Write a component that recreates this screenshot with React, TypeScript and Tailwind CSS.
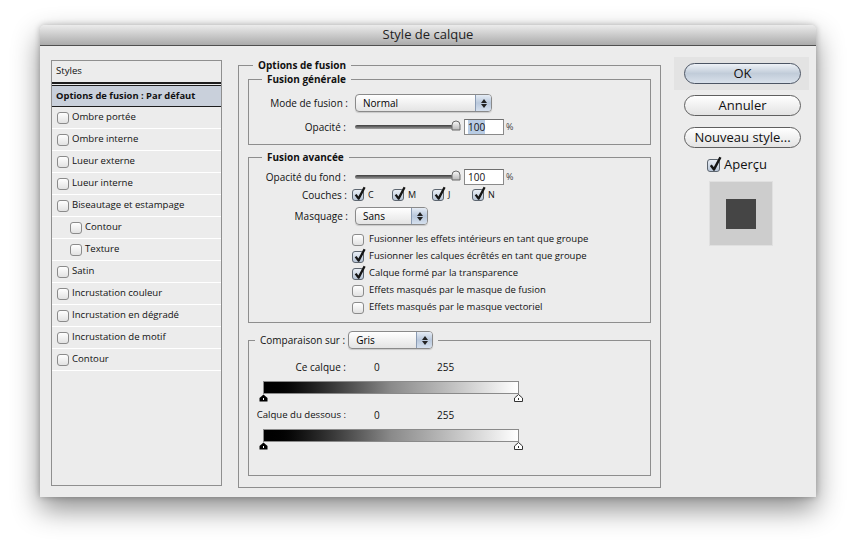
import React from 'react';

const FONT = "font-['Open_Sans',sans-serif]";

const Check = ({ checked = false, big = false }: { checked?: boolean; big?: boolean }) => (
  <span
    className={`relative inline-block shrink-0 border rounded-[3px] ${
      big ? 'w-[13px] h-[13px]' : 'w-[12px] h-[12px]'
    } ${
      checked
        ? 'border-[#5d6670] bg-gradient-to-b from-[#e9eef5] to-[#b8c6d8]'
        : 'border-[#8b8b8b] bg-gradient-to-b from-white to-[#e2e2e2]'
    }`}
  >
    {checked && (
      <svg
        className="absolute left-[1px] -top-[4px]"
        width={big ? 13 : 12}
        height={big ? 16 : 15}
        viewBox="0 0 12 15"
      >
        <path d="M1.6 8.6 L4.6 12.6 L10.6 1.2" stroke="#151515" strokeWidth="2.3" fill="none" strokeLinejoin="round" />
      </svg>
    )}
  </span>
);

const Popup = ({ label, width }: { label: string; width: string }) => (
  <div className={`flex h-[18px] ${width} rounded-[4px] border border-[#8a8a8a] bg-gradient-to-b from-white to-[#e4e4e4] shadow-[0_1px_1px_rgba(0,0,0,0.15)] overflow-hidden`}>
    <span className="flex-1 pl-[7px] text-[10px] leading-[16px] text-black">{label}</span>
    <span className="flex w-[16px] flex-col items-center justify-center gap-[1px] border-l border-[#8a9bb3] bg-gradient-to-b from-[#e5ecf5] via-[#b9c8dc] to-[#d5e0ee]">
      <svg width="6" height="4" viewBox="0 0 6 4"><path d="M3 0 L6 4 L0 4 Z" fill="#222" /></svg>
      <svg width="6" height="4" viewBox="0 0 6 4"><path d="M0 0 L6 0 L3 4 Z" fill="#222" /></svg>
    </span>
  </div>
);

const Slider = () => (
  <div className="flex w-[106px] items-center">
    <div className="h-[4px] w-[98px] rounded-full bg-gradient-to-b from-[#3e3e3e] to-[#a2a2a2]" />
    <svg className="-ml-[2px] -mt-[4px]" width="10" height="11" viewBox="0 0 10 11">
      <path d="M1 10 L1 5 Q1 1 5 1 Q9 1 9 5 L9 10 Z" fill="url(#th)" stroke="#6b6b6b" strokeWidth="1" />
      <defs>
        <linearGradient id="th" x1="0" y1="0" x2="0" y2="1">
          <stop offset="0" stopColor="#fafafa" />
          <stop offset="1" stopColor="#b8b8b8" />
        </linearGradient>
      </defs>
    </svg>
  </div>
);

const NumField = ({ selected = false }: { selected?: boolean }) => (
  <div className="flex items-center">
    <div className="ml-[3px] h-[16px] w-[40px] border border-[#8a8a8a] border-t-[#6f6f6f] bg-white pl-[3px] text-[10px] leading-[14px]">
      <span className={selected ? 'bg-[#b8cce4]' : ''}>100</span>
    </div>
    <span className="ml-[2px] text-[9px] text-[#444]">%</span>
  </div>
);

const Legend = ({ children, offset = 'ml-[13px]' }: { children: React.ReactNode; offset?: string }) => (
  <legend className={`${offset} px-[5px] text-[10px] font-bold leading-[12px]`}>{children}</legend>
);

const GradBar = () => (
  <div className="ml-[14px] w-[256px]">
    <div className="h-[13px] border border-[#8a8a8a] bg-gradient-to-r from-black via-[#8a8a8a] to-white" />
    <div className="flex justify-between -mx-[4px] h-[8px]">
      <svg width="9" height="8" viewBox="0 0 9 8"><path d="M0.5 7.5 L0.5 4 L4.5 0.5 L8.5 4 L8.5 7.5 Z" fill="#000" /><path d="M4 4 L5 4 L5 6 L4 6 Z" fill="#fff" /></svg>
      <svg width="9" height="8" viewBox="0 0 9 8"><path d="M0.5 7.5 L0.5 4 L4.5 0.5 L8.5 4 L8.5 7.5 Z" fill="#fff" stroke="#333" strokeWidth="1" /><path d="M4 4 L5 4 L5 6 L4 6 Z" fill="#333" /></svg>
    </div>
  </div>
);

const styleItems: { label: string; indent?: boolean }[] = [
  { label: 'Ombre portée' },
  { label: 'Ombre interne' },
  { label: 'Lueur externe' },
  { label: 'Lueur interne' },
  { label: 'Biseautage et estampage' },
  { label: 'Contour', indent: true },
  { label: 'Texture', indent: true },
  { label: 'Satin' },
  { label: 'Incrustation couleur' },
  { label: 'Incrustation en dégradé' },
  { label: 'Incrustation de motif' },
  { label: 'Contour' },
];

const advancedChecks = [
  { label: 'Fusionner les effets intérieurs en tant que groupe', checked: false },
  { label: 'Fusionner les calques écrêtés en tant que groupe', checked: true },
  { label: 'Calque formé par la transparence', checked: true },
  { label: 'Effets masqués par le masque de fusion', checked: false },
  { label: 'Effets masqués par le masque vectoriel', checked: false },
];

const App: React.FC = () => {
  return (
    <div className={`h-[553px] w-[856px] bg-white pl-[40px] pt-[25px] text-[#111] ${FONT}`}>
      <div className="flex h-[472px] w-[776px] flex-col overflow-hidden rounded-t-[5px] bg-[#ececec] shadow-[0_12px_28px_rgba(0,0,0,0.45),0_0_6px_rgba(0,0,0,0.25)]">
        {/* Title bar */}
        <div className="flex h-[21px] items-center justify-center border-b border-[#4f4f4f] bg-gradient-to-b from-[#ececec] to-[#ababab] text-[13px] text-[#222]">
          Style de calque
        </div>

        <div className="flex flex-1 items-start pl-[11px] pt-[14px]">
          {/* Styles list */}
          <div className="flex h-[426px] w-[171px] flex-col border border-[#8f8f8f] bg-[#ececec] text-[9.6px]">
            <div className="flex h-[23px] items-center border-b-2 border-[#1d1d1d] pl-[4px]">Styles</div>
            <div className="mt-[1px] flex h-[22px] items-center border-y border-[#1d1d1d] bg-[#c9d0db] pl-[4px] text-[9.4px] font-bold">
              Options de fusion : Par défaut
            </div>
            {styleItems.map((it, i) => (
              <div
                key={i}
                className={`flex h-[22px] items-center gap-[3px] border-b border-white ${it.indent ? 'pl-[18px]' : 'pl-[5px]'}`}
              >
                <Check />
                <span>{it.label}</span>
              </div>
            ))}
          </div>

          {/* Options de fusion */}
          <fieldset className="-mt-[1px] ml-[16px] h-[429px] w-[423px] border border-[#8e8e8e] px-[9px]">
            <Legend offset="ml-[5px]">Options de fusion</Legend>

            <fieldset className="mt-[2px] h-[72px] border border-[#8e8e8e]">
              <Legend>Fusion générale</Legend>
              <div className="mt-[9px] flex items-center text-[10px]">
                <span className="w-[99px] text-right">Mode de fusion :</span>
                <div className="ml-[7px]">
                  <Popup label="Normal" width="w-[137px]" />
                </div>
              </div>
              <div className="mt-[7px] flex items-center text-[10px]">
                <span className="w-[97px] text-right">Opacité :</span>
                <div className="ml-[9px] flex items-center">
                  <Slider />
                  <NumField selected />
                </div>
              </div>
            </fieldset>

            <fieldset className="mt-[6px] h-[172px] border border-[#8e8e8e]">
              <Legend>Fusion avancée</Legend>
              <div className="mt-[6px] flex items-center text-[10px]">
                <span className="w-[97px] text-right">Opacité du fond :</span>
                <div className="ml-[9px] flex items-center">
                  <Slider />
                  <NumField />
                </div>
              </div>
              <div className="mt-[3px] flex h-[14px] items-center text-[10px]">
                <span className="w-[98px] text-right">Couches :</span>
                <div className="ml-[5px] flex items-center">
                  {['C', 'M', 'J', 'N'].map((c) => (
                    <span key={c} className="flex w-[40px] items-center gap-[4px]">
                      <Check checked />
                      <span className="text-[9px]">{c}</span>
                    </span>
                  ))}
                </div>
              </div>
              <div className="mt-[5px] flex items-center text-[10px]">
                <span className="w-[99px] text-right">Masquage :</span>
                <div className="ml-[7px]">
                  <Popup label="Sans" width="w-[73px]" />
                </div>
              </div>
              <div className="mt-[6px] flex flex-col pl-[103px] text-[9.5px]">
                {advancedChecks.map((c, i) => (
                  <div key={i} className="flex h-[17px] items-center gap-[5px]">
                    <Check checked={c.checked} />
                    <span>{c.label}</span>
                  </div>
                ))}
              </div>
            </fieldset>

            <fieldset className="mt-[8px] h-[145px] border border-[#8e8e8e]">
              <legend className="ml-[6px] flex items-center px-[5px] text-[10px]">
                <span>Comparaison sur :</span>
                <span className="ml-[3px]">
                  <Popup label="Gris" width="w-[85px]" />
                </span>
              </legend>
              <div className="mt-[12px] flex h-[12px] items-center text-[10px]">
                <span className="w-[97px] text-right">Ce calque :</span>
                <span className="ml-[28px] w-[6px]">0</span>
                <span className="ml-[57px]">255</span>
              </div>
              <div className="mt-[8px]">
                <GradBar />
              </div>
              <div className="mt-[7px] flex h-[12px] items-center text-[10px]">
                <span className="w-[97px] text-right text-[9.6px]">Calque du dessous :</span>
                <span className="ml-[28px] w-[6px]">0</span>
                <span className="ml-[57px]">255</span>
              </div>
              <div className="mt-[8px]">
                <GradBar />
              </div>
            </fieldset>
          </fieldset>

          {/* Right column */}
          <div className="-mt-[3px] ml-[13px] flex w-[135px] flex-col">
            <div className="bg-[#e3e3e3] pb-[6px] pl-[10px] pt-[3px]">
              <button className="h-[21px] w-[117px] rounded-full border border-[#4c5564] bg-gradient-to-b from-[#eef2f7] via-[#c1ccd9] to-[#d9e1eb] text-[13px] leading-[19px] text-[#111]">
                OK
              </button>
            </div>
            <button className="ml-[10px] mt-[5px] h-[21px] w-[117px] rounded-full border border-[#5f5f5f] bg-gradient-to-b from-white via-[#f1f1f1] to-[#e3e3e3] text-[13px] leading-[19px] text-[#111]">
              Annuler
            </button>
            <button className="ml-[10px] mt-[11px] h-[21px] w-[117px] rounded-full border border-[#5f5f5f] bg-gradient-to-b from-white via-[#f1f1f1] to-[#e3e3e3] text-[13px] leading-[19px] text-[#111]">
              Nouveau style...
            </button>
            <div className="ml-[33px] mt-[9px] flex h-[16px] items-center gap-[4px] text-[13px]">
              <Check checked big />
              <span>Aperçu</span>
            </div>
            <div className="ml-[35px] mt-[8px] flex h-[65px] w-[64px] items-center justify-center border border-[#e0e0e0] bg-[#cdcdcd]">
              <div className="h-[30px] w-[30px] bg-[#454545]" />
            </div>
          </div>
        </div>
      </div>
    </div>
  );
};

export default App;
